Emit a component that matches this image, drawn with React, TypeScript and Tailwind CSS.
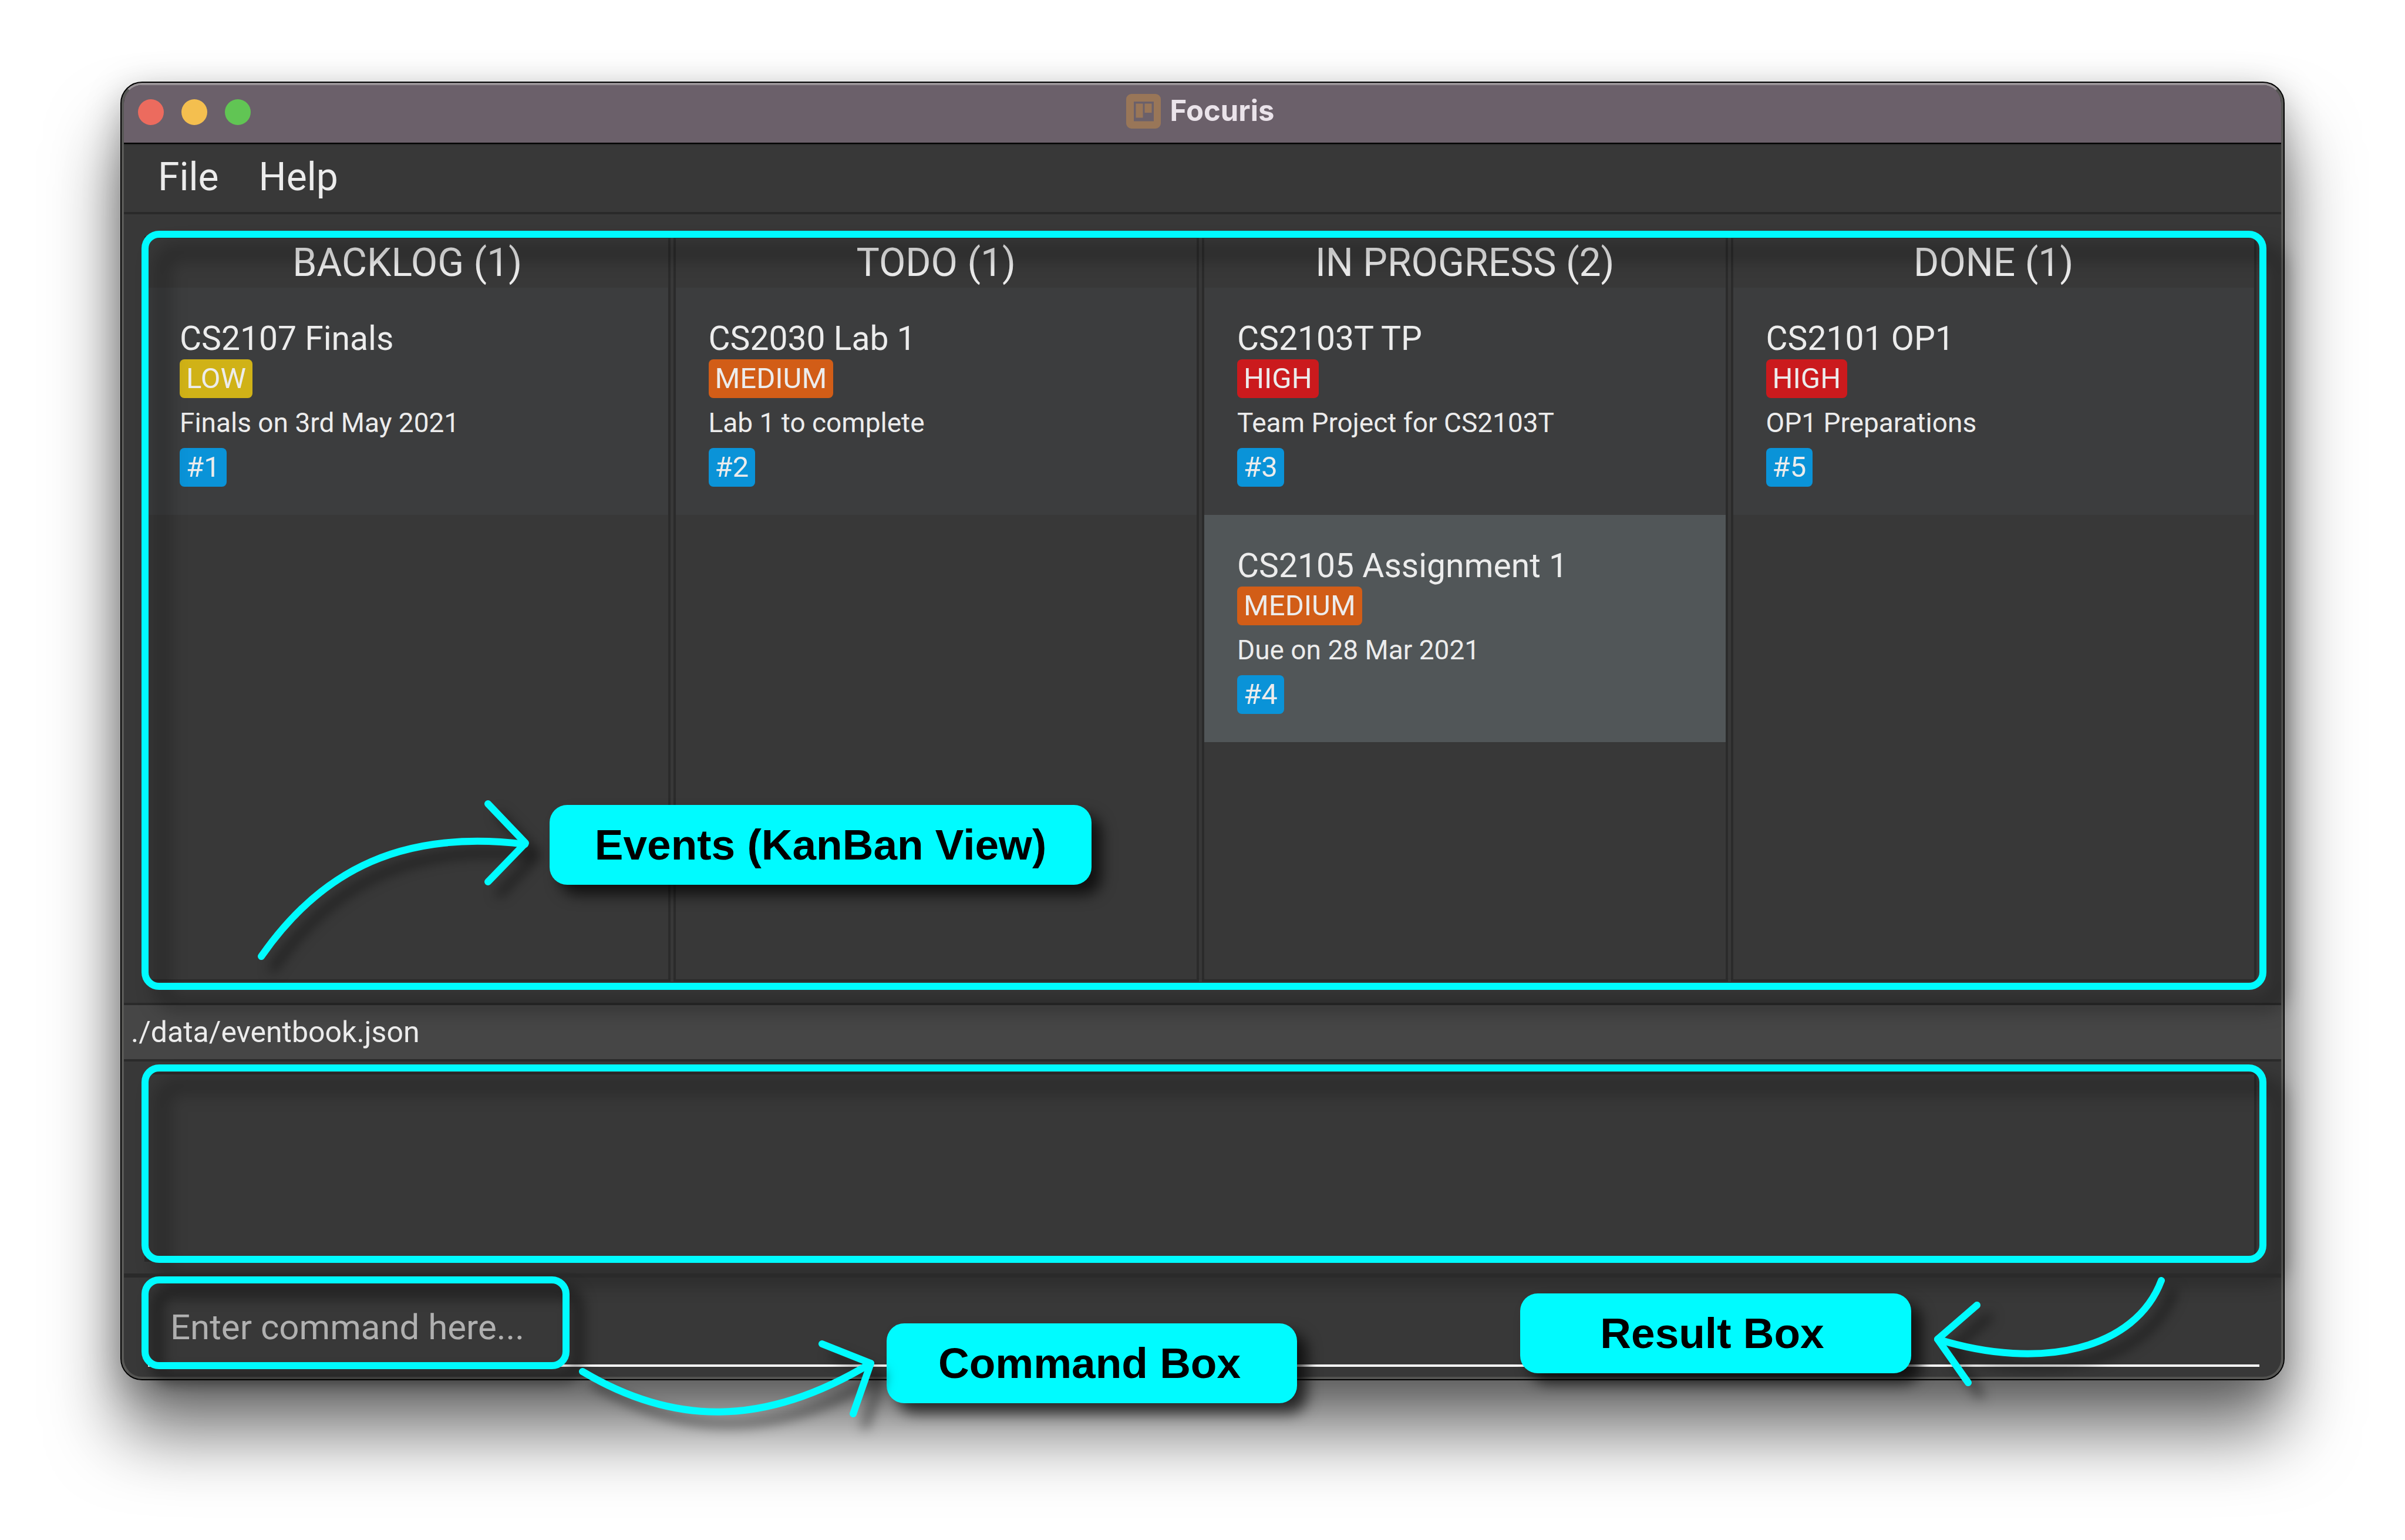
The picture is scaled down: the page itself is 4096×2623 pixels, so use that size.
type Priority = "LOW" | "MEDIUM" | "HIGH";

interface KanbanEvent {
  id: number;
  title: string;
  priority: Priority;
  description: string;
  selected?: boolean;
}

const priorityColor: Record<Priority, string> = {
  LOW: "bg-[#d0b217]",
  MEDIUM: "bg-[#d25d17]",
  HIGH: "bg-[#cb1a1d]",
};

const columns: { name: string; events: KanbanEvent[] }[] = [
  {
    name: "BACKLOG",
    events: [{ id: 1, title: "CS2107 Finals", priority: "LOW", description: "Finals on 3rd May 2021" }],
  },
  {
    name: "TODO",
    events: [{ id: 2, title: "CS2030 Lab 1", priority: "MEDIUM", description: "Lab 1 to complete" }],
  },
  {
    name: "IN PROGRESS",
    events: [
      { id: 3, title: "CS2103T TP", priority: "HIGH", description: "Team Project for CS2103T" },
      { id: 4, title: "CS2105 Assignment 1", priority: "MEDIUM", description: "Due on 28 Mar 2021", selected: true },
    ],
  },
  {
    name: "DONE",
    events: [{ id: 5, title: "CS2101 OP1", priority: "HIGH", description: "OP1 Preparations" }],
  },
];

function AppIcon() {
  return (
    <svg viewBox="0 0 59 59" className="size-[59px]" aria-hidden="true">
      <path
        fillRule="evenodd"
        fill="#997658"
        d="M9 0h41a9 9 0 0 1 9 9v41a9 9 0 0 1-9 9H9a9 9 0 0 1-9-9V9a9 9 0 0 1 9-9zM13 13v33.500h34V13z"
      />
      <rect x="16.500" y="16.500" width="12" height="24" fill="#997658" />
      <rect x="31.500" y="16.500" width="12" height="15.500" fill="#997658" />
    </svg>
  );
}

function TitleBar() {
  return (
    <header className="grid h-[102px] grid-cols-[1fr_auto_1fr] items-center rounded-t-[31px] border-b-2 border-[#2a2a2a] bg-[#6b606a] pb-2 shadow-[inset_0_-2px_0_#000]">
      <div className="flex gap-[30px] pl-6">
        <button type="button" aria-label="Close" className="size-11 rounded-full bg-[#ec6b5e]" />
        <button type="button" aria-label="Minimize" className="size-11 rounded-full bg-[#f4bf4f]" />
        <button type="button" aria-label="Zoom" className="size-11 rounded-full bg-[#61c554]" />
      </div>
      <h1 className="mr-2 mb-1 flex items-center gap-4 font-['Inter',sans-serif] text-[49px] leading-[60px] font-bold text-[#eae3ea]">
        <AppIcon />
        Focuris
      </h1>
    </header>
  );
}

function EventCard({ event }: { event: KanbanEvent }) {
  return (
    <li
      className={
        "flex flex-col items-start px-14 pt-[52px] pb-12 " + (event.selected ? "bg-[#515658]" : "bg-[#3c3d3e]")
      }
    >
      <h3 className="text-[57px] leading-[70px]">{event.title}</h3>
      <span className={"rounded-lg px-[11px] text-[49px] leading-[66px] " + priorityColor[event.priority]}>
        {event.priority}
      </span>
      <p className="text-[46px] leading-[85px]">{event.description}</p>
      <span className="rounded-lg bg-[#0a93d8] px-[11px] text-[49px] leading-[66px]">#{event.id}</span>
    </li>
  );
}

const frame =
  "pointer-events-none absolute rounded-[30px] border-[12px] border-[#00fbff] drop-shadow-[28px_30px_16px_rgba(0,0,0,0.55)]";

const label =
  "absolute rounded-[30px] bg-[#00fbff] text-center font-['Liberation_Sans',Arial,sans-serif] text-[73px] leading-[136px] font-bold text-black shadow-[17px_17px_24px_rgba(0,0,0,0.7)]";

function Arrow({ className, viewBox, curve, head }: { className: string; viewBox: string; curve: string; head: string }) {
  return (
    <svg
      viewBox={viewBox}
      aria-hidden="true"
      className={
        "pointer-events-none absolute overflow-visible drop-shadow-[20px_20px_10px_rgba(0,0,0,0.5)] " + className
      }
    >
      <g fill="none" stroke="#00fbff" strokeWidth="12" strokeLinecap="round" strokeLinejoin="round">
        <path d={curve} />
        <path d={head} />
      </g>
    </svg>
  );
}

export default function App() {
  return (
    <main className="flex min-h-screen flex-col bg-white px-[205px] pt-[139px] pb-[272px] font-['Roboto',sans-serif] text-[#ececec]">
      <div className="flex grow flex-col rounded-[37px] border-2 border-black bg-[#383838] shadow-[0_90px_120px_rgba(0,0,0,0.55),0_15px_60px_rgba(0,0,0,0.25)]">
        <div className="flex grow flex-col rounded-[35px] border-4 border-t-[#989296] border-r-[#585856] border-b-[#535351] border-l-[#585856]">
          <TitleBar />

          <nav className="flex h-[118px] items-center gap-[68px] border-b-4 border-[#2a2a2a] px-[58px] pb-1 text-[66px] leading-[80px]">
            <button type="button">File</button>
            <button type="button">Help</button>
          </nav>

          <section aria-label="Events" className="relative flex grow flex-col pt-[37px] pr-[42px] pb-9 pl-[35px]">
            <div className="grid grow grid-cols-4 gap-[5px]">
              {columns.map((column) => (
                <div key={column.name} className="border-4 border-[#2b2b2b]">
                  <h2 className="text-center text-[66px] leading-[84px]">
                    {column.name} ({column.events.length})
                  </h2>
                  <ul>
                    {column.events.map((event) => (
                      <EventCard key={event.id} event={event} />
                    ))}
                  </ul>
                </div>
              ))}
            </div>
            <div className={frame + " top-7 right-[25px] bottom-[22px] left-[30px]"} />
            <Arrow
              className="bottom-[60px] left-[214px] h-[295px] w-[490px]"
              viewBox="0 0 490 295"
              curve="M20 276C125 125 265 60 469 85"
              head="M406 16L470 83L406 149"
            />
            <p className={label + " bottom-[201px] left-[725px] w-[923px]"}>Events (KanBan View)</p>
          </section>

          <p className="h-[100px] border-y-4 border-[#2a2a2a] bg-[#464646] px-3 text-[50px] leading-[92px]">
            ./data/eventbook.json
          </p>

          <section aria-label="Result" className="relative flex h-[361px] flex-col pt-[18px] pr-[42px] pb-5 pl-[35px]">
            <textarea
              readOnly
              aria-label="Result"
              className="block w-full grow resize-none border-4 border-[#2a2a2a] bg-transparent outline-none"
            />
            <div className={frame + " top-[5px] right-[25px] bottom-[18px] left-[30px]"} />
          </section>

          <section aria-label="Command" className="relative border-t-[7px] border-[#2a2a2a] pt-6 pr-[37px] pb-[17px] pl-[41px]">
            <input
              type="text"
              aria-label="Command"
              placeholder="Enter command here..."
              className="block h-32 w-full border-b-4 border-white bg-transparent pb-1 pl-[38px] text-[60px] outline-none placeholder:text-[#b0b0b0]"
            />
            <div className="pointer-events-none absolute -top-0.5 left-[30px] h-[158px] w-[729px] rounded-[30px] border-[12px] border-[#00fbff] drop-shadow-[20px_20px_12px_rgba(0,0,0,0.7)]" />
            <p className={label + " top-[78px] left-[1299px] w-[699px] pr-2"}>Command Box</p>
            <Arrow
              className="top-[102px] left-[761px] h-[145px] w-[530px]"
              viewBox="0 0 530 145"
              curve="M20 58C173 149 328 155 511 44"
              head="M428 11L511 44L481 130"
            />
            <p className={label + " top-[27px] right-[630px] w-[666px] pr-3"}>Result Box</p>
            <Arrow
              className="-top-2 right-[183px] h-[205px] w-[420px]"
              viewBox="0 0 420 205"
              curve="M399 13C355 130 195 168 18 113"
              head="M85 55L18 113L70 187"
            />
          </section>
        </div>
      </div>
    </main>
  );
}
